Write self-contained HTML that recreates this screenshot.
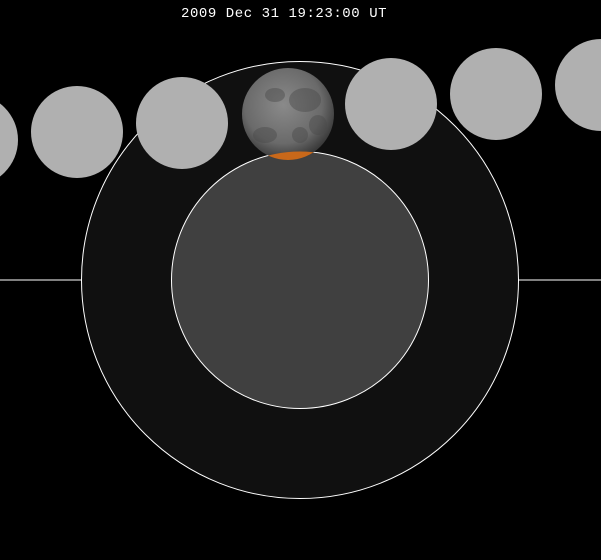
<!DOCTYPE html>
<html><head><style>body{margin:0;background:#000;width:601px;height:560px;overflow:hidden}</style></head>
<body>
<svg width="601" height="560" xmlns="http://www.w3.org/2000/svg" style="display:block">
<defs>
<radialGradient id="mg" cx="45%" cy="40%" r="60%">
<stop offset="0" stop-color="#8a8a8a"/><stop offset="0.7" stop-color="#6a6a6a"/><stop offset="1" stop-color="#3a3a3a"/>
</radialGradient>
<clipPath id="mc"><circle cx="288" cy="114" r="46"/></clipPath>
</defs>
<rect width="601" height="560" fill="#000"/>
<line x1="0" y1="280" x2="82" y2="280" stroke="#fff" stroke-width="1"/>
<line x1="518" y1="280" x2="601" y2="280" stroke="#fff" stroke-width="1"/>
<circle cx="300" cy="280" r="218.5" fill="#101010" stroke="#fff" stroke-width="1"/>
<circle cx="300" cy="280" r="128.5" fill="#404040" stroke="#fff" stroke-width="1"/>
<g fill="#b0b0b0">
<circle cx="-28" cy="140" r="46"/>
<circle cx="77" cy="132" r="46"/>
<circle cx="182" cy="123" r="46"/>
<circle cx="391" cy="104" r="46"/>
<circle cx="496" cy="94" r="46"/>
<circle cx="601" cy="85" r="46"/>
</g>
<circle cx="288" cy="114" r="46" fill="url(#mg)"/>
<g clip-path="url(#mc)" fill="#4a4a4a" opacity="0.45">
<ellipse cx="305" cy="100" rx="16" ry="12"/>
<ellipse cx="318" cy="125" rx="9" ry="10"/>
<ellipse cx="275" cy="95" rx="10" ry="7"/>
<ellipse cx="265" cy="135" rx="12" ry="8"/>
<circle cx="300" cy="135" r="8"/>
</g>
<g clip-path="url(#mc)">
<circle cx="300" cy="280" r="128.5" fill="#c8681a"/>
</g>
<text x="181" y="17" fill="#fff" font-family="Liberation Mono, monospace" font-size="14" letter-spacing="0.56">2009 Dec 31 19:23:00 UT</text>
</svg>
</body></html>
